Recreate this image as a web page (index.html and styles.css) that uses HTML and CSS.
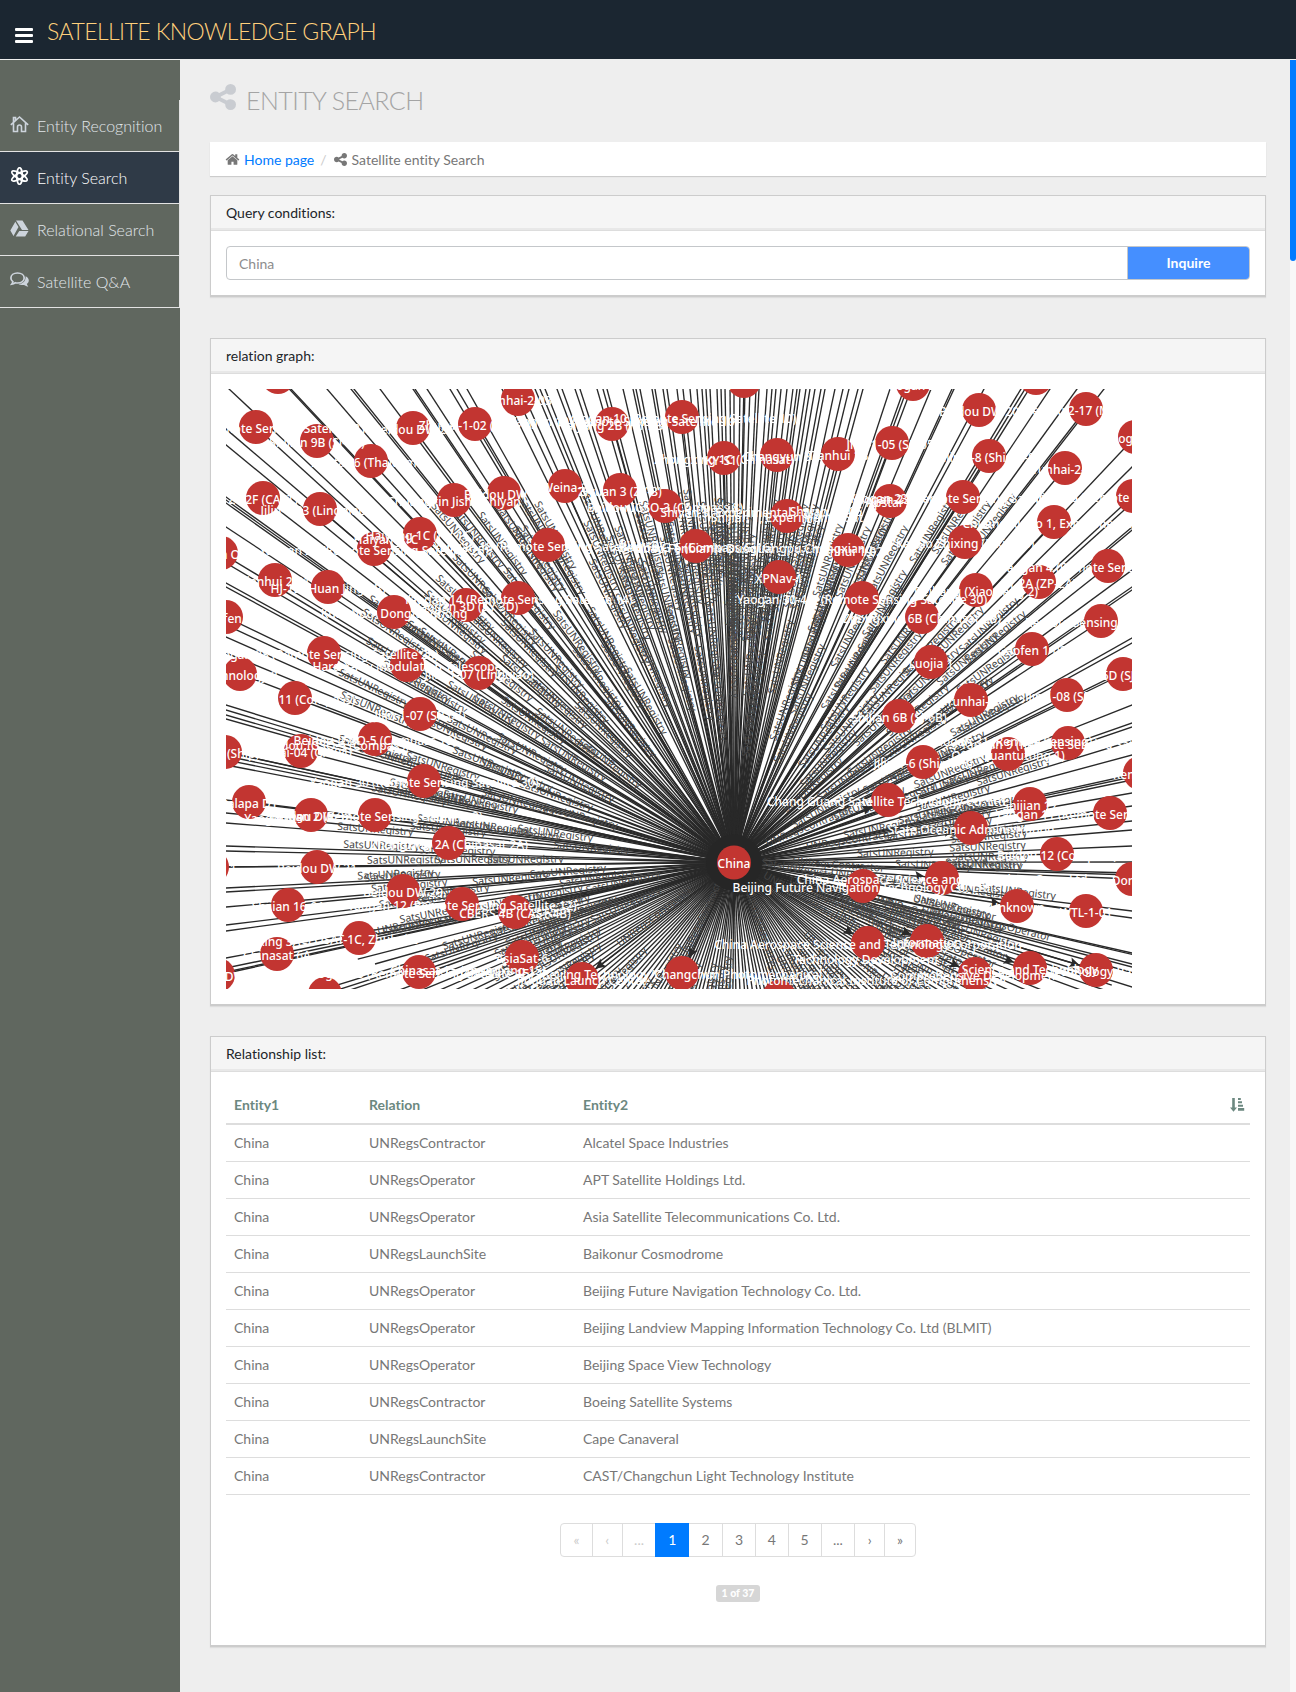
FILE: index.html
```html
<!DOCTYPE html>
<html lang="en">
<head>
<meta charset="utf-8">
<title>Satellite Knowledge Graph</title>
<link rel="stylesheet" href="styles.css">
</head>
<body>
<svg width="0" height="0" class="defs">
  <symbol id="share" viewBox="0 128 1536 1536"><path d="M1216 1024q133 0 226.500 93.500t93.500 226.500-93.500 226.500-226.500 93.500-226.500-93.500-93.500-226.500q0-12 2-34l-360-180q-92 86-218 86-133 0-226.500-93.500t-93.500-226.500 93.500-226.500 226.500-93.500q126 0 218 86l360-180q-2-22-2-34 0-133 93.500-226.500t226.500-93.500 226.500 93.500 93.500 226.500-93.500 226.500-226.500 93.500q-126 0-218-86l-360 180q2 22 2 34t-2 34l360 180q92-86 218-86z"/></symbol>
  <symbol id="home" viewBox="0 0 1792 1792"><path d="M1472 992v480q0 26-19 45t-45 19h-384v-384h-256v384h-384q-26 0-45-19t-19-45v-480q0-1 .5-3t.5-3l575-474 575 474q1 2 1 6zm223-69l-62 74q-8 9-21 11h-3q-13 0-21-7l-692-577-692 577q-12 8-24 7-13-2-21-11l-62-74q-8-10-7-23.500t11-21.500l719-599q32-26 76-26t76 26l244 204v-195q0-14 9-23t23-9h192q14 0 23 9t9 23v408l219 182q10 8 11 21.500t-7 23.500z"/></symbol>
</svg>
<header class="topbar">
  <span class="burger"><i></i><i></i><i></i></span>
  <h1>SATELLITE KNOWLEDGE GRAPH</h1>
</header>
<div class="shell">
  <nav class="sidebar">
    <a class="item"><svg class="nav-icon" viewBox="0 0 19 18" fill="none" stroke="currentColor" stroke-width="1.600"><path d="M.8 9.800 9.500 2l8.700 7.800M3.500 8.200v8.300h4V12q0-2 2-2t2 2v4.500h4V8.200M3.500 7V2.500h2V5"/></svg><span>Entity Recognition</span></a>
    <a class="item active"><svg class="nav-icon" viewBox="0 0 19 18" fill="none" stroke="currentColor" stroke-width="1.700"><ellipse cx="9.500" cy="9" rx="2.800" ry="8.300"/><ellipse cx="9.500" cy="9" rx="2.800" ry="8.800" transform="rotate(60 9.500 9)"/><ellipse cx="9.500" cy="9" rx="2.800" ry="8.800" transform="rotate(120 9.500 9)"/></svg><span>Entity Search</span></a>
    <a class="item"><svg class="nav-icon" viewBox="0 0 19 18" fill="currentColor"><path d="M6 1.500h6.500l6 9.500h-6.500zM5.300 2.700l3.200 5.200-5 9.100L.3 11.400zM9.300 12h9.200L15.200 17.500H5.700z"/></svg><span>Relational Search</span></a>
    <a class="item"><svg class="nav-icon" viewBox="0 0 19 18" fill="none" stroke="currentColor"><path stroke-width="1.700" d="M7.500 2c3.800 0 6.700 2.100 6.700 5s-2.900 5-6.700 5c-.8 0-1.500-.1-2.200-.3C4.200 12.500 3 13 1.700 13.200c.6-.7 1.100-1.500 1.200-2.500C1.600 9.800.9 8.500.9 7c0-2.900 2.800-5 6.600-5z"/><path fill="currentColor" stroke="none" d="M15.600 5.200c2 .9 3.200 2.400 3.200 4.200 0 1.500-.8 2.700-2 3.600.2 1 .8 1.800 1.500 2.600-1.700-.2-3-.8-4.200-1.700-2.200.3-4.300-.1-5.600-.9 4.200-.2 7.400-2.700 7.100-7.800z"/></svg><span>Satellite Q&amp;A</span></a>
  </nav>
  <main class="content">
    <h2 class="title"><svg class="title-icon"><use href="#share"/></svg><span>ENTITY SEARCH</span></h2>
    <div class="crumbs">
      <svg class="crumb-home"><use href="#home"/></svg><a>Home page</a><span class="slash">/</span><svg class="crumb-share"><use href="#share"/></svg><span>Satellite entity Search</span>
    </div>
    <section class="card query">
      <div class="card-head">Query conditions:</div>
      <div class="card-body"><div class="field"><div class="input">China</div><div class="button">Inquire</div></div></div>
    </section>
    <section class="card relation">
      <div class="card-head">relation graph:</div>
      <div class="card-body"><svg id="graph" class="graph" width="906" height="600" viewBox="0 0 906 600"></svg></div>
    </section>
    <section class="card list">
      <div class="card-head">Relationship list:</div>
      <div class="card-body">
        <table>
          <thead><tr><th class="c1">Entity1</th><th class="c2">Relation</th><th><div class="sorted"><span>Entity2</span><svg width="15" height="15" viewBox="0 0 15 15"><path d="M2.200 1h2.600v9.500H7l-3.500 4.300L0 10.500h2.200zM8 1h2.800v2H8zM8 4.200h4v2H8zM8 7.700h5v2H8zM8 11h6.200v2.800H8z"/></svg></div></th></tr></thead>
          <tbody>
            <tr><td>China</td><td>UNRegsContractor</td><td>Alcatel Space Industries</td></tr>
            <tr><td>China</td><td>UNRegsOperator</td><td>APT Satellite Holdings Ltd.</td></tr>
            <tr><td>China</td><td>UNRegsOperator</td><td>Asia Satellite Telecommunications Co. Ltd.</td></tr>
            <tr><td>China</td><td>UNRegsLaunchSite</td><td>Baikonur Cosmodrome</td></tr>
            <tr><td>China</td><td>UNRegsOperator</td><td>Beijing Future Navigation Technology Co. Ltd.</td></tr>
            <tr><td>China</td><td>UNRegsOperator</td><td>Beijing Landview Mapping Information Technology Co. Ltd (BLMIT)</td></tr>
            <tr><td>China</td><td>UNRegsOperator</td><td>Beijing Space View Technology</td></tr>
            <tr><td>China</td><td>UNRegsContractor</td><td>Boeing Satellite Systems</td></tr>
            <tr><td>China</td><td>UNRegsLaunchSite</td><td>Cape Canaveral</td></tr>
            <tr><td>China</td><td>UNRegsContractor</td><td>CAST/Changchun Light Technology Institute</td></tr>
          </tbody>
        </table>
        <div class="pager">
          <span class="off arrow">«</span><span class="off chev">‹</span><span class="off dots">...</span><span class="current">1</span><span>2</span><span>3</span><span>4</span><span>5</span><span class="dots">...</span><span class="chev">›</span><span class="arrow">»</span>
        </div>
        <div class="badge">1 of 37</div>
      </div>
    </section>
  </main>
  <div class="track"><div class="thumb"></div></div>
</div>
<script src="graph.js"></script>
</body>
</html>
```
FILE: styles.css
```css
* { box-sizing: border-box; }
body { margin: 0; font: 14px/20px Lato, sans-serif; font-variant-ligatures: none; color: #777; background: #eee; }
.defs { display: block; }
.topbar { height: 60px; background: #1b2631; border-bottom: 1px solid #eee; display: flex; padding-left: 15px; }
.burger { display: flex; flex-direction: column; gap: 3px; width: 18px; margin-top: 28px; }
.burger i { height: 3px; background: #fff; border-radius: 1px; }
.topbar h1 { margin: 16px 0 0 14px; font-size: 23px; line-height: 30px; letter-spacing: -0.570px; font-weight: 300; color: #ffd07c; white-space: nowrap; }
.shell { display: flex; height: 1632px; }
.sidebar { width: 180px; flex: none; background: #60675f; padding-top: 40px; }
.item { height: 52px; display: flex; align-items: center; border-right: 1px solid #e3e3e3; border-bottom: 1px solid #e3e3e3; padding: 0 0 0 10px; font-size: 16px; font-weight: 300; color: #e0e6ea; white-space: nowrap; }
.item.active { background: #2f3a47; color: #fff; }
.nav-icon { width: 19px; height: 18px; margin: -3px 8px 0 0; flex: none; color: #cdd4dc; }
.active .nav-icon { color: #fff; }
.content { flex: 1; padding: 0 24px 0 30px; min-width: 0; }
.title { display: flex; margin: 0; height: 82px; padding-top: 24px; font-size: 25px; line-height: 32px; letter-spacing: -0.550px; font-weight: 300; color: #a4a4a4; }
.title-icon { width: 26px; height: 26px; fill: #c9ccd1; margin-right: 10px; }
.crumbs { display: flex; align-items: center; height: 34px; padding: 2px 15px 0; background: #fff; box-shadow: 0 1px 1px #ccc; }
.crumbs svg { fill: #777; }
.crumbs a { color: #007bff; }
.crumb-home { width: 15px; height: 15px; margin: -1px 4px 0 0; }
.slash { margin: 0 7px 0 6px; color: #ccc; }
.crumb-share { width: 13px; height: 13px; margin: -2px 5px 0 0; }
.card { background: #fff; border: 1px solid #ccc; border-bottom: 2px solid #ccc; box-shadow: 0 1px 1px #ddd; }
.card-head { height: 35px; padding: 7px 15px 0; color: #212529; background: #f5f5f5; border-bottom: 1px solid #ddd; box-shadow: inset 0 -2px #e8e8e8; }
.card-body { padding: 15px; }
.query { margin-top: 19px; height: 102px; }
.relation { margin-top: 41px; height: 668px; }
.list { margin-top: 30px; height: 611px; }
.field { display: flex; height: 34px; border: 1px solid #c4c7ca; border-radius: 4px; overflow: hidden; line-height: 34px; }
.input { flex: 1; padding-left: 12px; color: #8d8d8d; }
.button { width: 122px; background: #458fff; border-left: 1px solid #c4c7ca; color: #fff; font-weight: 700; text-align: center; line-height: 32px; }
.graph { display: block; overflow: hidden; }
.graph text { font-family: "Noto Sans", sans-serif; text-anchor: middle; }
.graph line { stroke: #292929; stroke-width: 1.350; }
.edge-label { fill: #444; font-size: 10.500px; }
.node { fill: #c23531; }
.node-label { fill: #fff; font-size: 12px; font-weight: 500; }
table { width: 100%; margin-top: -1px; border-collapse: collapse; table-layout: fixed; }
.c1 { width: 135px; }
.c2 { width: 214px; }
th { height: 38px; padding: 0 8px; text-align: left; border-bottom: 2px solid #ddd; color: #6c8880; font-weight: 700; }
td { height: 37px; padding: 0 8px; border-bottom: 1px solid #ddd; }
.sorted { display: flex; justify-content: space-between; align-items: center; margin-right: -3px; }
.sorted svg { fill: #6c8880; }
.pager { display: flex; width: 356px; height: 34px; margin: 28px auto 0; border: 1px solid #ddd; border-radius: 4px; line-height: 32px; text-align: center; }
.pager span { width: 33px; border-left: 1px solid #ddd; }
.pager span:first-child { border-left: 0; }
.pager .arrow { width: 31px; font-size: 14px; }
.pager .chev { width: 30px; font-size: 14px; }
.pager .dots { width: 34px; }
.pager .off { color: #ccc; }
.pager .current { width: 34px; margin: -1px 0; background: #007bff; color: #fff; border: 0; line-height: 34px; }
.pager .current + span { border-left: 0; }
.badge { width: 44px; height: 17px; margin: 28px auto 0; border-radius: 3px; background: #d6d6d6; color: #fff; font-size: 10.500px; font-weight: 900; line-height: 16px; text-align: center; white-space: nowrap; }
.track { width: 6px; background: #f8f8f8; }
.thumb { height: 201px; background: #007bff; border-radius: 0 0 3px 3px; }
```
FILE: graph.js
```javascript
const hub = { x: 508, y: 473.500 };
const rs = n => `Yaogan ${n} (Remote Sensing Satellite ${n})`;

// x, y, label, and 1 when the edge points away from the hub
const nodes = [
  [52, -12, "Shijian 9A"], [30, 38, rs(21)], [91, 52, "Shijian 9B (SJ-9B)"], [145, 72, "APStar-6 (Thaicom 5)"],
  [187, 39, "Beidou DW 24"], [249, 35, "Zhuhai-1-02 (OVS-1)"], [292, 10, "Yunhai-2-03"], [37, 109, "ZY 2F (CAST)"],
  [94, 120, "Jilin-1-03 (Lingqiao 3)"], [228, 111, "Chuangxin Jishu Shiyan"], [278, 104, "Beidou DW 17"],
  [194, 145, "Haiyang 1C (HY 1C)"], [148, 160, rs(25)], [-5, 164, "Yaogan OF-2"], [49, 191, "Tianhui 2-01"],
  [102, 198, "HJ-1B (Huan Jing 1B)"], [0, 228, "Gaofen 6"], [168, 223, "Kuaizhou, Dongfanghong"],
  [240, 216, "Yaogan 3D (ZY 3D)"], [292, 209, rs(14)], [98, 264, rs(28)], [14, 285, "Technology 2"],
  [181, 276, "Hard X-ray Modulation Telescope"], [253, 284, "Jilin-1-07 (Lingqiao)"], [69, 309, "Beidou 11 (Compass)"],
  [194, 325, "Jilin-1-07 (SP-07)"], [149, 350, "Beidou IGSO-5 (Compass 10)"], [75, 362, "Zhuhai-04 (GX-04)"],
  [-1, 363, "Alpha (Ship)"], [198, 392, rs(30)], [23, 413, "Palapa D1"], [85, 426, "Beidou DW 32"],
  [149, 426, rs(2)], [223, 454, "Zhongxing 2A (Chinasat 2A)"], [91, 478, "Beidou DW 31"], [-14, 478, "Beijing 1"],
  [177, 502, "Beidou DW 29"], [62, 516, "Shijian 16-01"], [236, 515, rs(12)], [289, 523, "CBERS 4B (CAST-4B)"],
  [133, 549, "CFOSAT-1C, Zhuhai 2"], [51, 565, "Chinasat 6A"], [-8, 586, "Beidou DW 7"], [193, 583, rs(15)],
  [296, 568, "AsiaSat-6"], [99, 605, "Yaogan 5"], [386, 35, "Haiyang 2B (HY 2B)"], [456, 28, rs(10)],
  [518, -8, "Apstar 6"], [498, 69, "Zhongxing 1C (Chinasat)"], [551, 66, "Changyun 3"], [612, 65, "Tianhui 1B"],
  [339, 97, "Weina-2"], [394, 101, "Ziyuan 3 (ZY-3)"], [439, 117, "Beidou IGSO-3 (Compass 8)"],
  [561, 127, "Shijian 1, Experimental Sat"], [322, 156, rs(18)], [470, 157, "Beidou G-6 (Compass G-16)"],
  [553, 188, "XPNav-1"], [687, -5, "Yaogan 2A"], [753, 21, "Beidou DW 20"], [810, -11, "Gaofen 3"],
  [860, 20, "Beidou 2-17 (MEO-17)"], [666, 54, "Jilin-1-05 (SP-05)"], [763, 67, "Jilin-1-8 (Shipin-8)"],
  [909, 48, "Yaogan 9A"], [839, 79, "Yunhai-2-01"], [664, 112, "Apstar 7"], [737, 108, rs(23)], [907, 107, rs(6)],
  [828, 133, "Chuang Xinbo 1, Experimental 1"], [622, 161, "Tianhui 1-02"], [739, 153, "Kaituo Zhixing (Pixing 3)"], [882, 177, rs(4)],
  [813, 193, "ZY 2A (ZP-2A)"], [750, 201, "Beihang (Xiaoxiang 2)"], [636, 209, "Yaogan 30-4-1 (Remote Sensing Satellite 30)"],
  [696, 228, "Zhongxing 6B (Chinasat 6B)"], [875, 232, "Remote Sensing Satellite 8"], [806, 260, "Gaofen 1-02"],
  [705, 273, "Luojia 1"], [897, 285, "SJ 6D (SJ-6D)"], [745, 311, "Yunhai-1"], [841, 306, "Jilin 1-08 (SP-08)"],
  [673, 327, "Shijian 6B (SJ-6B)"], [782, 365, "QSS (Quantutong 1)"], [842, 354, rs(9)], [697, 373, "Jilin-1-6 (Shipin-6)"],
  [914, 384, "Remote 3"], [662, 411, "Chang Guang Satellite Technology Co. Ltd.", 1], [804, 415, "Shijian 17"],
  [884, 424, rs(11)], [745, 439, "State Oceanic Administration", 1], [831, 465, "Beidou 12 (Compass)"],
  [637, 497, "Beijing Future Navigation Technology Co. Ltd."], [716, 489, "China Aerospace Science and Technology Corp. Ltd", 1],
  [906, 490, "Dong F"], [791, 517, "Unknown", 1], [860, 522, "WTL-1-01"],
  [642, 554, "China Aerospace Science and Technology Corporation", 1], [701, 552, "Information", 1],
  [749, 585, "Comprehensive Development", 1], [804, 579, "Science and Technology", 1], [870, 581, "Technology Base", 1],
  [356, 590, "Jiuquan Launch Center", 1], [456, 584, "Beijing Technology/Changchun Photomechanical", 1], [553, 608, "Boeing"]
];

// Captions whose own nodes lie beneath another node
const extras = [
  [398, 31, rs(10)], [528, 158, "Chao Fenbianlv Duoguangpu.Chengxiang"], [600, 121, "Shijian 11-05"], [660, 109, "Yaogan 23-1"],
  [500, 122, "Shiyan 3, Experimental"], [160, 149, "Haiyang 1C"], [640, 569, "Technology Development"],
  [650, 590, "Photomechanical Institute of Comprehensive"], [785, 351, "Yaogan 31 (Remote Sensing)"],
  [110, 355, "Beidou IGSO-5 (Compass)"], [48, 428, "Yaogan 29"], [242, 580, "Chinasat 15 (Zhongxing 15)"],
  [495, 70, "KY-S1"], [48, 551, "Pixing 3A"]
];

// Where edges to nodes outside the viewport leave it
const exitsTop = [3, 65, 101, 125, 128, 154, 187, 189, 201, 224, 231, 241, 276, 295, 309, 314, 319, 331, 336, 349, 354, 371, 377, 381, 397, 407, 410, 414, 426, 429, 437, 441, 451, 457, 464, 471, 476, 480, 484, 491, 495, 499, 504, 508, 514, 519, 524, 530, 533, 541, 546, 550, 555, 561, 567, 571, 574, 580, 584, 589, 595, 599, 609, 617, 623, 632, 637, 664, 678, 681, 705, 726, 728, 758, 795, 799, 824, 851, 878];
const exitsLeft = [40, 56, 108, 111, 114, 138, 174, 194, 198, 236, 248, 264, 316, 321, 326, 330, 363, 367, 371, 376, 411, 424, 434, 457, 462, 478, 499, 503, 518, 536, 542, 569, 579, 583];
const exitsRight = [78, 114, 138, 141, 181, 198, 201, 249, 254, 278, 316, 334, 338, 352, 366, 388, 391, 404, 417, 432, 441, 457, 473, 484, 486, 522, 529, 564, 578, 598];

let seed = 17;
function random() {
  seed = (seed * 16807) % 2147483647;
  return seed / 2147483647;
}
const edges = [];
function outward(x, y) {
  const k = 1.080 + random() * 0.350;
  edges.push([hub.x + (x - hub.x) * k, hub.y + (y - hub.y) * k, "SatsUNRegistry", 0]);
}
exitsTop.forEach(x => outward(x, 0));
exitsLeft.forEach(y => outward(0, y));
exitsRight.forEach(y => outward(906, y));
for (let a = 0.270; a < 2.850; a += 0.019 + random() * 0.011) {
  const r = 260 + random() * 230;
  edges.push([hub.x + Math.cos(a) * r * 1.200, hub.y + Math.sin(a) * r, a < 1.300 ? "UNRegsOperator" : "SatsUNRegistry", 0]);
}
nodes.forEach(n => edges.push([n[0], n[1], n[3] ? "UNRegsContractor" : "SatsUNRegistry", n[3]]));

const lines = [], labels = [], heads = [], dots = [], captions = [];
const caption = (x, y, t) => `<text class="node-label" x="${x}" y="${y + 5.500}">${t}</text>`;
edges.forEach(([x, y, text, out]) => {
  const dx = x - hub.x, dy = y - hub.y, len = Math.hypot(dx, dy);
  const angle = Math.atan2(dy, dx) * 180 / Math.PI;
  const mx = hub.x + dx / 2, my = hub.y + dy / 2;
  lines.push(`<line x1="${hub.x}" y1="${hub.y}" x2="${x.toFixed(1)}" y2="${y.toFixed(1)}"/>`);
  const turn = Math.abs(angle) > 90 ? angle + 180 : angle;
  labels.push(`<text class="edge-label" transform="translate(${mx.toFixed(1)} ${my.toFixed(1)}) rotate(${turn.toFixed(1)})" y="-2">${text}</text>`);
  if (out) {
    heads.push(`<path d="M0 0l-10-5 2 5-2 5z" fill="#292929" transform="translate(${x - dx / len * 17} ${y - dy / len * 17}) rotate(${angle})"/>`);
  }
});
nodes.forEach(([x, y, t]) => {
  dots.push(`<circle class="node" cx="${x}" cy="${y}" r="17"/>`);
  captions.push(caption(x, y, t));
});
extras.forEach(e => captions.push(caption(...e)));
document.getElementById("graph").innerHTML =
  lines.join("") + labels.join("") + heads.join("") +
  `<circle cx="508" cy="473.500" r="28" fill="#262626"/>` +
  dots.join("") + captions.join("") +
  `<circle class="node" cx="508" cy="473.500" r="17"/>` + caption(508, 473, "China");
```
